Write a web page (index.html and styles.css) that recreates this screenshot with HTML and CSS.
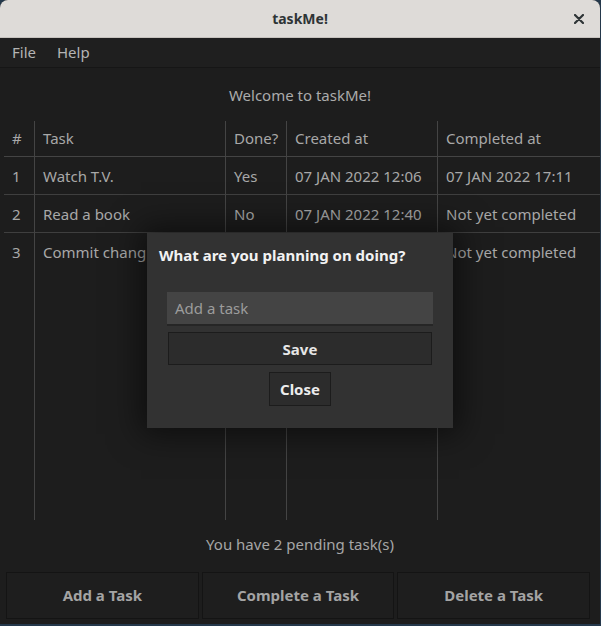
FILE: index.html
```html
<!DOCTYPE html>
<html>
<head>
<meta charset="utf-8">
<link rel="stylesheet" href="styles.css">
</head>
<body>
<div class="window">
  <div class="titlebar">
    <span class="title">taskMe!</span>
    <span class="close-x">
      <svg width="10" height="10" viewBox="0 0 10 10"><path d="M1 1 L9 9 M9 1 L1 9" stroke="#2e3436" stroke-width="2.2" stroke-linecap="round"/></svg>
    </span>
  </div>
  <div class="menubar">
    <span class="menu-item">File</span>
    <span class="menu-item">Help</span>
  </div>
  <div class="main">
    <div class="welcome">Welcome to taskMe!</div>
    <div class="table">
      <div class="cell head c1">#</div>
      <div class="cell head">Task</div>
      <div class="cell head">Done?</div>
      <div class="cell head">Created at</div>
      <div class="cell head">Completed at</div>

      <div class="cell row c1">1</div>
      <div class="cell row">Watch T.V.</div>
      <div class="cell row">Yes</div>
      <div class="cell row">07 JAN 2022 12:06</div>
      <div class="cell row">07 JAN 2022 17:11</div>

      <div class="cell row c1">2</div>
      <div class="cell row">Read a book</div>
      <div class="cell row">No</div>
      <div class="cell row">07 JAN 2022 12:40</div>
      <div class="cell row">Not yet completed</div>

      <div class="cell last c1">3</div>
      <div class="cell last">Commit chang</div>
      <div class="cell last"></div>
      <div class="cell last"></div>
      <div class="cell last">Not yet completed</div>

      <div class="cell fill c1"></div>
      <div class="cell fill"></div>
      <div class="cell fill"></div>
      <div class="cell fill"></div>
      <div class="cell fill"></div>
    </div>
    <div class="pending">You have 2 pending task(s)</div>
    <div class="actions">
      <button class="action">Add a Task</button>
      <button class="action">Complete a Task</button>
      <button class="action">Delete a Task</button>
    </div>

    <div class="dialog">
      <div class="dialog-title">What are you planning on doing?</div>
      <div class="dialog-form">
        <div class="input">Add a task</div>
        <button class="save">Save</button>
        <button class="dclose">Close</button>
      </div>
    </div>
  </div>
</div>
</body>
</html>
```
FILE: styles.css
```css
* { box-sizing: border-box; }
html, body { margin: 0; padding: 0; }
body {
  background: #24384b;
  width: 601px;
  height: 626px;
  font-family: "Noto Sans", "Open Sans", sans-serif;
  overflow: hidden;
}
.window {
  width: 600px;
  height: 624px;
  background: #1d1d1d;
  border-radius: 8px 8px 0 0;
  overflow: hidden;
  display: flex;
  flex-direction: column;
}
.titlebar {
  height: 38px;
  flex: none;
  background: #dedbd8;
  border-bottom: 1px solid #c6c2be;
  display: flex;
  align-items: center;
  justify-content: center;
  position: relative;
}
.title {
  font-weight: bold;
  font-size: 14px;
  color: #2e3436;
}
.close-x {
  position: absolute;
  right: 16px;
  top: 14px;
  display: flex;
}
.menubar {
  height: 30px;
  flex: none;
  background: #1f1f1f;
  border-bottom: 1px solid #161616;
  display: flex;
  align-items: center;
  padding-left: 12px;
  padding-bottom: 2px;
  gap: 21px;
}
.menu-item {
  color: #b4b4b4;
  font-size: 15px;
}
.main {
  flex: 1;
  position: relative;
  display: flex;
  flex-direction: column;
}
.welcome {
  color: #ababab;
  font-size: 15px;
  text-align: center;
  height: 53px;
  padding-top: 17px;
}
.table {
  margin-left: 4px;
  height: 399px;
  display: grid;
  grid-template-columns: 30px 191px 61px 151px 1fr;
  grid-template-rows: 36px 38px 38px 38px 1fr;
}
.cell {
  color: #a8a8a8;
  font-size: 15px;
  display: flex;
  align-items: center;
  padding-left: 8px;
  border-left: 1px solid #444;
  white-space: nowrap;
  overflow: hidden;
}
.cell.c1 { border-left: none; padding-left: 8px; }
.cell.head { border-bottom: 1px solid #444; padding-bottom: 1px; }
.cell.row { border-bottom: 1px solid #3f3f3f; }
.pending {
  color: #a6a6a6;
  font-size: 15px;
  text-align: center;
  height: 52px;
  padding-top: 14px;
}
.actions {
  display: flex;
  gap: 3px;
  padding: 0 10px 0 6px;
}
.action {
  flex: 1;
  height: 47px;
  background: #1e1e1e;
  border: 1px solid #141414;
  color: #a4a4a4;
  font-family: "Noto Sans", "Open Sans", sans-serif;
  font-weight: bold;
  font-size: 15px;
  padding-bottom: 2px;
}
.dialog {
  position: absolute;
  left: 147px;
  top: 165px;
  width: 306px;
  height: 195px;
  background: #323232;
  box-shadow: 0 0 30px 6px rgba(0,0,0,0.55);
  display: flex;
  flex-direction: column;
}
.dialog-title {
  color: #f2f2f2;
  font-weight: bold;
  font-size: 15px;
  padding: 12px 0 0 12px;
  height: 59px;
}
.dialog-form {
  display: flex;
  flex-direction: column;
  align-items: center;
  padding: 0 20px;
}
.input {
  width: 266px;
  height: 34px;
  background: #444444;
  border-bottom: 2px solid #262626;
  color: #9c9c9c;
  font-size: 15px;
  padding-left: 8px;
  display: flex;
  align-items: center;
}
.save {
  margin-top: 6px;
  width: 264px;
  height: 33px;
  background: #2c2c2c;
  border: 1px solid #1c1c1c;
  color: #e6e6e6;
  font-family: "Noto Sans", "Open Sans", sans-serif;
  font-weight: bold;
  font-size: 15px;
}
.dclose {
  margin-top: 7px;
  width: 62px;
  height: 34px;
  background: #2c2c2c;
  border: 1px solid #1c1c1c;
  color: #ececec;
  font-family: "Noto Sans", "Open Sans", sans-serif;
  font-weight: bold;
  font-size: 15px;
}
```
